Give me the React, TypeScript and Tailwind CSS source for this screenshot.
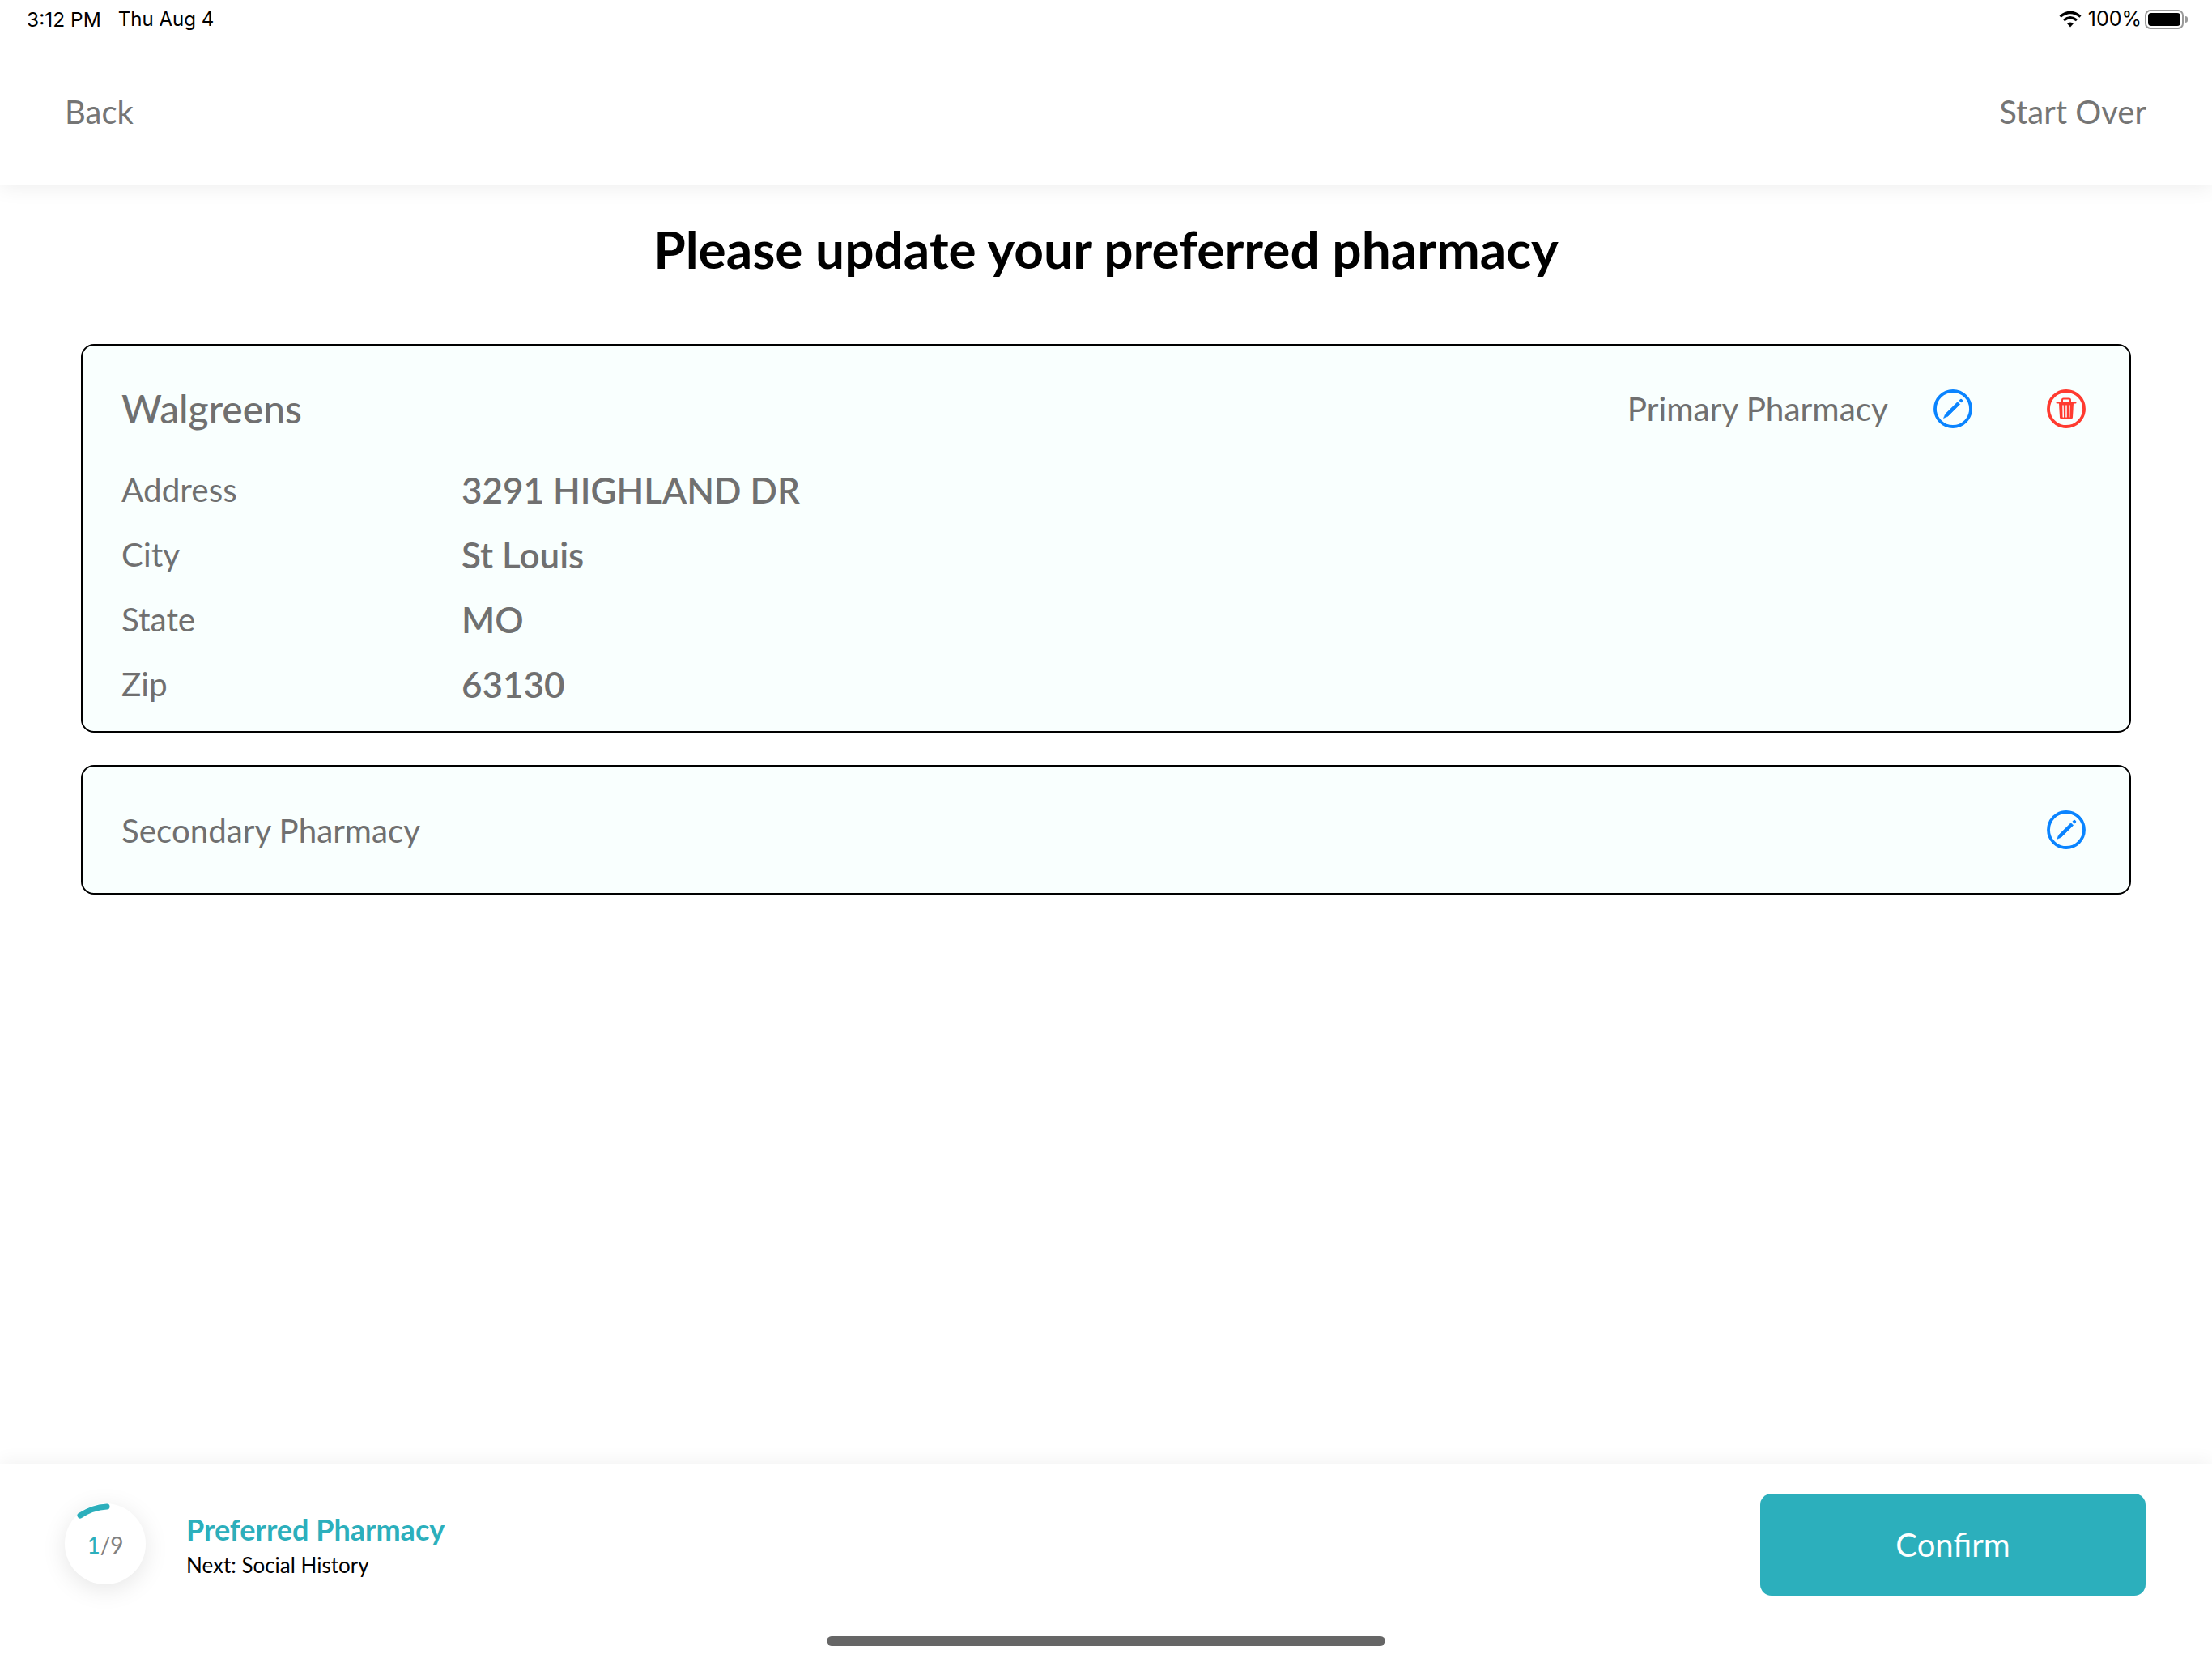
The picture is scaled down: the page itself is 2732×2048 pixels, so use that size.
// Pharmacy update step of the check-in flow.
const FONT = "font-['Lato','Noto_Sans',sans-serif]";

function EditIcon(): JSX.Element {
  return (
    <svg width="48" height="48" viewBox="0 0 48 48" fill="none" className="shrink-0">
      <circle cx="24" cy="24" r="22" stroke="#0a84ff" strokeWidth="3.8" />
      <path d="M12.500 35.500 L14.800 30.200 L29.800 15.500 L32.700 18.400 L17.800 33.200 Z" fill="#0a84ff" strokeLinejoin="round" stroke="#0a84ff" strokeWidth="0.6" />
      <path d="M31.500 13.800 L33.300 12 Q34 11.400 34.800 12 L36 13.200 Q36.500 14 36 14.600 L34.200 16.500 Z" fill="#0a84ff" />
    </svg>
  );
}

function TrashIcon(): JSX.Element {
  return (
    <svg width="48" height="48" viewBox="0 0 48 48" fill="none" className="shrink-0">
      <circle cx="24" cy="24" r="22" stroke="#ff3b30" strokeWidth="3.8" />
      <path d="M12.500 16.500 H35.500" stroke="#ff3b30" strokeWidth="2" strokeLinecap="round" />
      <path d="M19 16 V13 Q19 11.500 20.500 11.500 H27.500 Q29 11.500 29 13 V16" stroke="#ff3b30" strokeWidth="2" />
      <path d="M15 17 L16 34.500 Q16.200 37 18.500 37 H29.500 Q31.800 37 32 34.500 L33 17 Z" fill="#ff3b30" />
      <path d="M20 20 L20.300 34 M24 20 V34 M28 20 L27.700 34" stroke="#fbfffe" strokeWidth="1.500" strokeLinecap="round" />
    </svg>
  );
}

function WifiIcon(): JSX.Element {
  return (
    <svg width="28" height="22" viewBox="0 0 28 22" fill="none" className="shrink-0">
      <path d="M1.500 7.500 Q14 -2.500 26.500 7.500" stroke="#000" strokeWidth="3.200" />
      <path d="M6 12 Q14 5.500 22 12" stroke="#000" strokeWidth="3.200" />
      <path d="M10 16 L14 20.500 L18 16 Q14 13 10 16 Z" fill="#000" />
    </svg>
  );
}

function BatteryIcon(): JSX.Element {
  return (
    <div className="flex items-center">
      <div className="flex h-[24px] w-[48px] items-center justify-center rounded-[7px] border-2 border-[#999999]">
        <div className="h-[16px] w-[40px] rounded-[4px] bg-black" />
      </div>
      <div className="ml-[2px] h-[8px] w-[3px] rounded-r-sm bg-[#999999]" />
    </div>
  );
}

function StatusBar(): JSX.Element {
  return (
    <div className="flex h-[48px] items-center justify-between pl-[33px] pr-[30px] font-['Inter',sans-serif] text-[24px] text-black">
      <div className="flex gap-[21px]">
        <span className="text-[24.500px]">3:12 PM</span>
        <span>Thu Aug 4</span>
      </div>
      <div className="flex items-center">
        <WifiIcon />
        <span className="ml-[8px] mr-[4px] text-[25px]">100%</span>
        <BatteryIcon />
      </div>
    </div>
  );
}

function InfoRow({ label, value }: { label: string; value: string }): JSX.Element {
  return (
    <div className="flex h-[80px] items-center">
      <span className="w-[420px] text-[40.500px] text-[#707070]">{label}</span>
      <span className="text-[44px] font-semibold text-[#707070]">{value}</span>
    </div>
  );
}

function ProgressBadge(): JSX.Element {
  return (
    <div className="relative flex h-[100px] w-[100px] items-center justify-center rounded-full bg-white shadow-[0_6px_30px_rgba(0,0,0,0.1)]">
      {/* Step arc */}
      <svg width="100" height="100" viewBox="0 0 100 100" fill="none" className="absolute left-0 top-0">
        <path d="M19 15 Q34 5 52 4" stroke="#2cafbc" strokeWidth="7" strokeLinecap="round" />
      </svg>
      <span className="pt-[1px] text-[28px] text-[#808080]">
        <span className="text-[#2cafbc]">1</span>/9
      </span>
    </div>
  );
}

export default function App(): JSX.Element {
  return (
    <div className={`relative flex h-[2048px] w-[2732px] flex-col overflow-hidden bg-white ${FONT}`}>
      {/* Top bar */}
      <header className="relative z-10 h-[228px] bg-white shadow-[0_4px_24px_rgba(0,0,0,0.07)]">
        <StatusBar />
        <nav className="flex h-[180px] items-start justify-between pl-[80px] pr-[81px] pt-[66px] text-[40px] leading-[48px] text-[#757575]">
          <span>Back</span>
          <span>Start Over</span>
        </nav>
      </header>

      {/* Main content */}
      <main className="flex flex-1 flex-col px-[100px]">
        <h1 className="mt-[43px] text-center text-[64px] font-bold leading-[74px] text-black">
          Please update your preferred pharmacy
        </h1>

        <section className="mt-[80px] h-[480px] rounded-[16px] border-2 border-black bg-[#f9fffe] pl-[48px] pr-[54px] pt-[54px]">
          <div className="flex h-[48px] items-center justify-between">
            <span className="text-[48px] font-medium text-[#707070]">Walgreens</span>
            <div className="flex items-center">
              <span className="mr-[56px] text-[40.500px] text-[#707070]">Primary Pharmacy</span>
              <EditIcon />
              <div className="w-[92px]" />
              <TrashIcon />
            </div>
          </div>
          <div className="mt-[36px]">
            <InfoRow label="Address" value="3291 HIGHLAND DR" />
            <InfoRow label="City" value="St Louis" />
            <InfoRow label="State" value="MO" />
            <InfoRow label="Zip" value="63130" />
          </div>
        </section>

        <section className="mt-[40px] flex h-[160px] items-center justify-between rounded-[16px] border-2 border-black bg-[#f9fffe] pl-[48px] pr-[54px]">
          <span className="pt-[2px] text-[40.300px] text-[#707070]">Secondary Pharmacy</span>
          <EditIcon />
        </section>
      </main>

      {/* Bottom bar */}
      <footer className="relative flex h-[240px] items-start justify-between bg-white pl-[80px] pr-[82px] shadow-[0_-4px_20px_rgba(0,0,0,0.05)]">
        <div className="mt-[49px] flex items-start">
          <ProgressBadge />
          <div className="ml-[50px] mt-[9px] flex flex-col">
            <span className="text-[36px] font-bold leading-[46px] text-[#2cafbc]">Preferred Pharmacy</span>
            <span className="mt-[3px] text-[26px] leading-[36px] text-black">Next: Social History</span>
          </div>
        </div>
        <button className="mt-[37px] flex h-[126px] w-[476px] items-center justify-center rounded-[14px] bg-[#2cafbc] text-[40px] text-white">
          Confirm
        </button>
        <div className="absolute left-[1021px] top-[213px] h-[12px] w-[690px] rounded-full bg-[#666666]" />
      </footer>
    </div>
  );
}
